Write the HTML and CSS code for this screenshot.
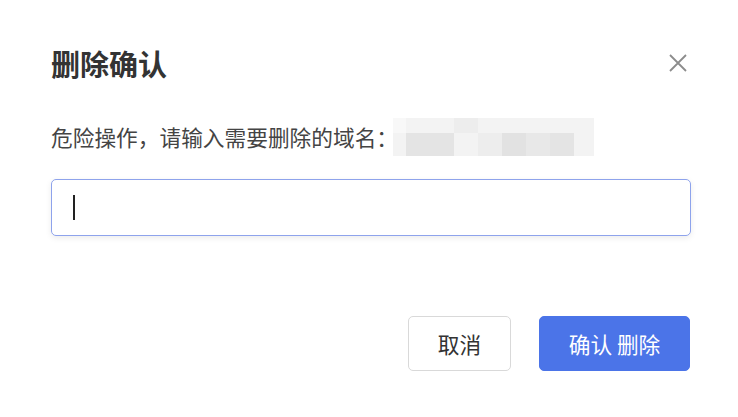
FILE: index.html
```html
<!DOCTYPE html>
<html lang="zh-CN">
<head>
<meta charset="utf-8">
<title>删除确认</title>
<link rel="stylesheet" href="styles.css">
</head>
<body>
<div class="dialog">
  <div class="header">
    <h1 class="title">删除确认</h1>
    <button class="close" aria-label="关闭">
      <svg width="18" height="18" viewBox="0 0 18 18"><path d="M1 1L17 17M17 1L1 17" stroke="#8c8c8c" stroke-width="1.8" fill="none"/></svg>
    </button>
  </div>
  <div class="desc">
    <span class="desc-text">危险操作，请输入需要删除的域名：</span>
    <div class="redacted">
      <i class="s1"></i><i class="s3"></i><i class="s3"></i><i class="s5"></i><i class="s3"></i><i class="s3"></i><i class="s3"></i><i class="s3"></i><i class="s3"></i>
      <i class="s3"></i><i class="s7"></i><i class="s7"></i><i class="s3"></i><i class="s5"></i><i class="s8"></i><i class="s6"></i><i class="s7"></i><i class="s3"></i>
    </div>
  </div>
  <div class="input"><span class="caret"></span></div>
  <div class="footer">
    <button class="btn btn-cancel">取消</button>
    <button class="btn btn-primary">确认 删除</button>
  </div>
</div>
</body>
</html>
```

FILE: styles.css
```css
* { box-sizing: border-box; }
html, body { margin: 0; padding: 0; background: #fff; }
body {
  font-family: "Noto Sans CJK SC", "Noto Sans", sans-serif;
  color: #333;
  width: 738px;
  height: 417px;
  overflow: hidden;
}
.dialog {
  padding: 40px 47px 0 51px;
}
.header {
  display: flex;
  justify-content: space-between;
  align-items: center;
  height: 46px;
}
.title {
  margin: 0;
  font-size: 29px;
  font-weight: 700;
  line-height: 46px;
  color: #333;
}
.close {
  border: 0;
  background: none;
  padding: 0;
  margin-right: 4px;
  width: 18px;
  height: 18px;
  display: flex;
}
.desc {
  margin-top: 32px;
  display: flex;
  align-items: center;
  height: 38px;
}
.desc-text {
  font-size: 21.7px;
  color: #444;
  line-height: 38px;
  margin-right: -5px;
}
.redacted {
  display: grid;
  grid-template-columns: 13px 24px 24px 24px 24px 24px 24px 24px 20px;
  grid-template-rows: 15px 23px;
}
.redacted i { display: block; }
.s1 { background: #f8f8f8; }
.s3 { background: #f3f3f3; }
.s5 { background: #ededed; }
.s6 { background: #e8e8e8; }
.s7 { background: #e4e4e4; }
.s8 { background: #e2e2e2; }
.input {
  margin-top: 23px;
  height: 57px;
  border: 1px solid #8ea3ec;
  border-radius: 5px;
  box-shadow: 0 2px 6px rgba(0, 0, 0, 0.08);
  display: flex;
  align-items: center;
  padding-left: 21px;
}
.caret {
  display: block;
  width: 2px;
  height: 25px;
  background: #222;
}
.footer {
  margin-top: 80px;
  display: flex;
  justify-content: flex-end;
  gap: 28px;
  padding-right: 1px;
}
.btn {
  height: 55px;
  border-radius: 5px;
  font-family: "Noto Sans CJK SC", "Noto Sans", sans-serif;
  font-size: 21.7px;
  padding: 0;
  cursor: pointer;
}
.btn-cancel {
  width: 103px;
  background: #fff;
  border: 1px solid #d9d9d9;
  color: #333;
}
.btn-primary {
  width: 151px;
  background: #4b74e8;
  border: 1px solid #4b74e8;
  color: #fff;
}
```
